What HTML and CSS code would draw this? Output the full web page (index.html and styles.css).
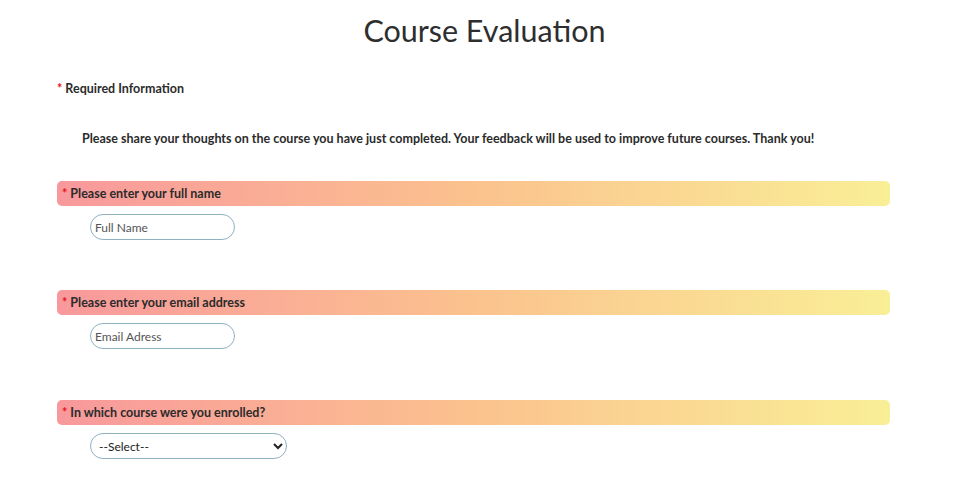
FILE: index.html
```html
<!DOCTYPE html>
<html>
<head>
<meta charset="utf-8">
<title>Course Evaluation</title>
<link rel="stylesheet" href="styles.css">
</head>
<body>
<h1 class="title">Course Evaluation</h1>
<form class="form">
  <p class="required-note"><span class="star">*</span> Required Information</p>
  <p class="intro">Please share your thoughts on the course you have just completed. Your feedback will be used to improve future courses. Thank you!</p>

  <div class="question">
    <div class="q-label"><span class="star">*</span> Please enter your full name</div>
    <div class="q-body"><input class="text-input" type="text" placeholder="Full Name"></div>
  </div>

  <div class="question">
    <div class="q-label"><span class="star">*</span> Please enter your email address</div>
    <div class="q-body"><input class="text-input" type="text" placeholder="Email Adress"></div>
  </div>

  <div class="question question-last">
    <div class="q-label"><span class="star">*</span> In which course were you enrolled?</div>
    <div class="q-body">
      <select class="select-input">
        <option>--Select--</option>
      </select>
    </div>
  </div>
</form>
</body>
</html>
```

FILE: styles.css
```css
html, body {
  margin: 0;
  padding: 0;
  background: #ffffff;
}
body {
  font-family: "Lato", "DejaVu Sans", sans-serif;
  color: #2b2b2b;
}
.title {
  margin: 0;
  padding-top: 11px;
  text-align: center;
  font-size: 30.5px;
  font-weight: 400;
  line-height: 38px;
  color: #2e2e2e;
}
.form {
  margin: 0 79px 0 57px;
}
.required-note {
  margin: 32px 0 0 0;
  font-size: 12.5px;
  font-weight: 700;
  line-height: 16px;
}
.star {
  color: #e8141c;
}
.intro {
  margin: 34px 0 0 25px;
  font-size: 12.5px;
  font-weight: 700;
  line-height: 16px;
}
.question {
  margin-top: 34px;
}
.question + .question {
  margin-top: 50px;
}
.question-last {
  padding-top: 1px;
}
.q-label {
  height: 25px;
  line-height: 25px;
  padding-left: 5px;
  border-radius: 5px;
  background: linear-gradient(90deg, #f8989c 0%, #fbc28e 50%, #f9ef97 100%);
  font-size: 12.5px;
  font-weight: 700;
  color: #2b2b2b;
}
.q-body {
  padding: 8px 0 0 33px;
}
.text-input {
  box-sizing: border-box;
  width: 145px;
  height: 26px;
  padding: 0 4px;
  border: 1px solid #8fb1c1;
  border-radius: 13px;
  font-family: inherit;
  font-size: 12px;
  color: #333;
  outline: none;
  display: block;
}
.text-input::placeholder {
  color: #555;
}
.select-input {
  box-sizing: border-box;
  width: 197px;
  height: 26px;
  padding: 0 4px;
  border: 1px solid #8fb1c1;
  border-radius: 13px;
  background: #fff;
  font-family: inherit;
  font-size: 12px;
  color: #222;
  display: block;
}
```
